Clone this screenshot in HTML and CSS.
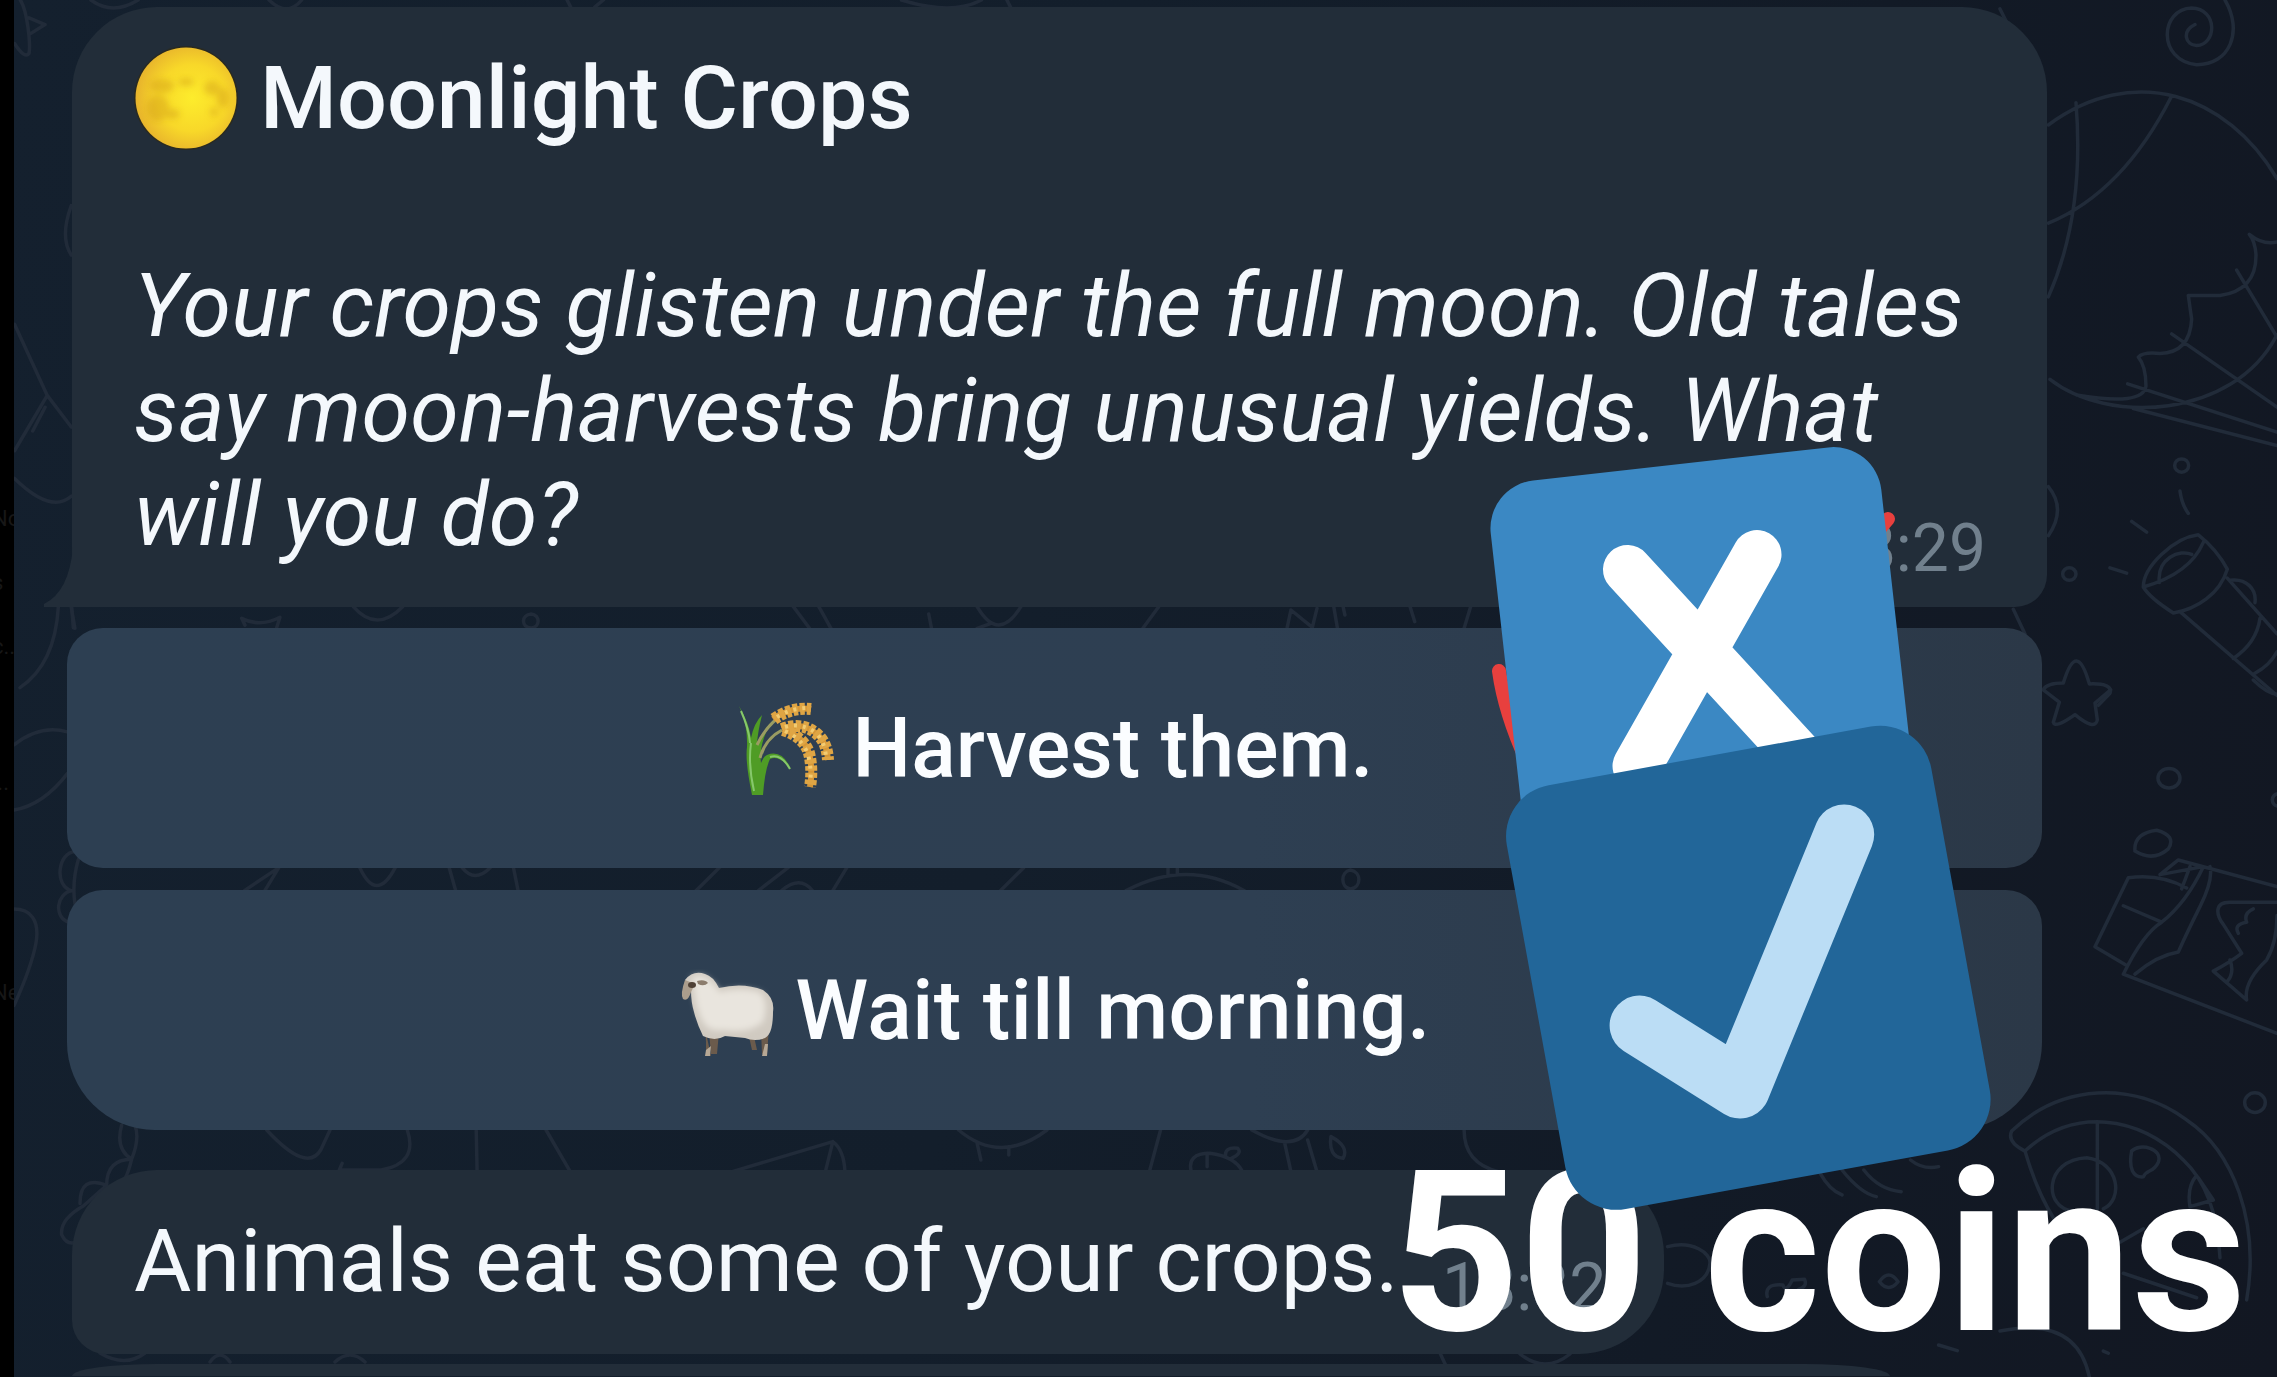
FILE: index.html
```html
<!DOCTYPE html>
<html lang="en">
<head>
<meta charset="utf-8">
<title>Moonlight Crops</title>
<link rel="stylesheet" href="styles.css">
</head>
<body>
<svg class="doodles" viewBox="0 0 2277 1377" aria-hidden="true">
  <!-- top left -->
  <g transform="scale(.727 .3954)">
    <path d="M28 0C38 30 42 110 40 135Q34 150 20 110M40 45L62 62L42 85M125 0Q155 40 190 0M370 0Q395 45 415 0M780 0L785 18M818 18L830 0M1240 0Q1310 40 1350 0M1385 0L1390 18M98 520Q82 600 98 645M20 820L65 1000L20 1140M65 1000L98 1080M45 1090L62 1030M20 1210Q70 1300 98 1255"/>
  </g>
  <!-- left edge -->
  <g transform="translate(0 560) scale(.3333 .521)">
    <path d="M175 90Q165 200 60 245M215 90L220 130M42 355Q120 315 202 330M42 480Q130 470 202 410M225 560C175 560 160 625 215 635M235 575Q215 620 225 660M215 635C170 640 160 685 205 695M42 670C90 670 120 690 108 735Q95 780 42 855M365 1085Q345 1130 395 1150Q420 1110 405 1085M395 1150Q380 1190 360 1200M395 1150Q320 1150 320 1200Q240 1180 240 1235M320 1200L250 1240Q180 1265 185 1295Q200 1315 225 1310M735 125L725 112Q780 130 840 110L830 130"/>
  </g>
  <!-- gaps between the bubbles -->
  <g transform="translate(60 590) scale(.9311 .3333)">
    <path d="M12 50L16 115M315 50Q340 130 368 50M506 72C495 75 495 112 506 114C516 112 516 75 506 72M785 40L805 115M815 50L828 115M933 72L936 115M985 50Q1008 160 1032 50M985 115L1000 100M1180 50L1163 115M1318 112L1322 60L1345 112L1350 55M1368 50L1372 115M1378 50L1380 75M1450 50L1455 95M1515 50L1508 115"/>
  </g>
  <g transform="translate(60 855) scale(.9311 .3333)">
    <path d="M198 107L235 38L220 107M322 38Q340 145 360 38M418 38L425 107M432 38Q445 85 462 38M487 38L492 107M708 38L683 107M782 38L750 107M845 38L830 107M775 107Q795 60 808 107M1035 38L1010 107M1145 107Q1210 10 1272 107M1190 38V60M1200 38V60M1386 45C1375 50 1375 98 1386 102C1398 98 1398 50 1386 45"/>
  </g>
  <g transform="translate(60 1120) scale(.9311 .3333)">
    <path d="M222 30Q265 160 280 90L290 30M373 30Q385 130 345 150H300L303 130M447 30L448 155M522 30L548 155M722 155L830 65L822 155M830 65Q842 90 843 155M965 30Q1010 135 1060 30M985 70L989 120M1019 80V105M1182 30L1170 155M1280 30Q1325 100 1340 30M1315 65L1322 155M1340 60L1350 155M1215 155Q1210 100 1235 100Q1262 110 1270 155M1232 100V140M1252 110Q1250 80 1265 85Q1270 100 1258 115M1365 50Q1362 110 1378 115Q1385 80 1365 50M1508 30Q1508 130 1545 155"/>
  </g>
  <g transform="translate(0 1340)">
    <path d="M100 13Q125 28 145 13M210 22Q220 8 230 22M335 22Q350 8 365 22M1440 13L1446 26M1520 14Q1545 34 1570 14"/>
  </g>
  <!-- swirl, parachute and torch -->
  <g transform="translate(2000 0) scale(.3333 .4464)">
    <path d="M0 20L20 50M585 55C545 70 555 100 590 102C650 100 655 20 575 18C480 20 470 135 590 145C690 145 730 70 675 0M145 280C400 140 680 210 831 400M145 500Q370 430 515 215M228 230Q255 480 145 665M150 850C320 950 700 940 831 750M230 885Q430 910 438 865Q438 820 415 800Q430 788 480 792Q570 790 575 715L565 662H660Q770 650 768 570Q765 540 748 525Q790 550 831 542M383 860L831 968M400 915L831 998M515 748L831 912M710 605L831 755M145 1090Q200 1140 145 1200M40 1365L75 1420M540 1100Q545 1130 565 1150M395 1168L440 1192M330 1272L380 1284M430 1315C430 1270 520 1205 595 1198Q650 1230 682 1275C660 1330 590 1365 520 1373Q450 1340 430 1315Q570 1285 610 1215M478 1305C470 1250 540 1230 575 1242M682 1295L831 1420M540 1370L831 1558M690 1300C740 1295 770 1320 765 1350M780 1385Q770 1440 700 1475M831 1460Q810 1490 765 1508M130 1545Q140 1530 190 1530Q230 1430 268 1532Q340 1530 330 1553L295 1580"/>
    <ellipse cx="545" cy="1043" rx="21" ry="15"/><ellipse cx="208" cy="1286" rx="20" ry="14"/>
  </g>
  <!-- star, banknote and pizza -->
  <g transform="translate(2000 680) scale(.3333 .4444)">
    <path d="M130 22L178 50L160 95Q165 110 225 78Q285 115 292 90L285 52L332 22M405 385Q400 345 470 338Q530 350 505 380Q460 410 405 385M285 600L385 445Q480 435 560 468M285 600L375 640M370 508L485 545M370 662L831 795M370 662Q430 570 485 545Q560 500 610 420L480 438L535 405L831 465M405 662Q470 620 535 612Q560 570 600 510Q640 450 630 420M545 470L570 420M831 500H690C640 500 650 530 670 550L725 615Q690 635 640 655L740 720Q730 680 800 630Q831 590 831 530M760 515Q730 525 740 545Q700 550 715 570M690 630Q705 660 680 680M75 1060Q20 1040 35 1015C180 910 400 900 560 990C700 1060 780 1220 740 1395M75 1060C220 960 420 980 550 1080Q650 1150 660 1300M75 1060Q110 1150 160 1210M292 995V1190M260 1075C130 1080 130 1190 220 1195M260 1075C360 1085 370 1170 310 1190M395 1060C420 1040 490 1055 475 1085C460 1110 440 1100 430 1118C400 1120 385 1100 395 1060M590 1115Q560 1140 570 1185L640 1170L595 1120M360 1265L430 1235M370 1335L590 1390M0 1465Q230 1430 268 1568M310 1510L325 1515M760 0Q800 30 831 32"/>
    <ellipse cx="507" cy="221" rx="33" ry="22"/><ellipse cx="765" cy="951" rx="31" ry="22"/><ellipse cx="835" cy="270" rx="18" ry="14"/>
  </g>
  <g transform="translate(1300 1120) scale(.623 .3333)">
    <path d="M590 380C630 360 660 400 658 430C655 490 620 510 590 490M835 160Q850 210 870 225M870 150Q900 220 925 230M905 150Q930 210 965 215M980 120Q1000 150 1025 140M750 530Q745 490 775 495Q780 520 790 480L810 478Q815 500 800 508M1025 675L1055 692M930 485Q945 445 960 485Q945 520 930 485"/>
  </g>
</svg>

<aside class="edge">
  <span class="edge-text">No</span><span class="edge-text">s</span><span class="edge-text">c..</span><span class="edge-text">l..</span><span class="edge-text">Ne</span>
</aside>

<main class="chat">
  <article class="bubble event">
    <svg class="tail" viewBox="0 0 30 60" aria-hidden="true"><path d="M29 0V60H0V57Q25 45 29 0Z"/></svg>
    <h1 class="title">
      <svg class="moon" viewBox="0 0 104 104" aria-hidden="true">
        <defs>
          <radialGradient id="moonFill" cx=".56" cy=".5" r=".55">
            <stop offset="0" stop-color="#fdec2c"/><stop offset=".6" stop-color="#f8d829"/><stop offset="1" stop-color="#e8b52c"/>
          </radialGradient>
          <filter id="soft"><feGaussianBlur stdDeviation="3"/></filter>
        </defs>
        <circle cx="52" cy="52" r="52" fill="#2a2a20"/>
        <circle cx="52" cy="52" r="50.5" fill="url(#moonFill)"/>
        <g fill="#cf9a18" opacity=".42" filter="url(#soft)"><ellipse cx="24" cy="62" rx="11" ry="13"/><ellipse cx="38" cy="68" rx="8" ry="5"/><ellipse cx="28" cy="40" rx="12" ry="7"/><ellipse cx="78" cy="42" rx="8" ry="7"/><ellipse cx="89" cy="52" rx="6" ry="10"/><circle cx="80" cy="66" r="4"/><ellipse cx="52" cy="36" rx="8" ry="4"/></g>
      </svg>
      <span>Moonlight Crops</span>
    </h1>
    <p class="story">Your crops glisten under the full moon. Old tales<br>say moon-harvests bring unusual yields. What<br>will you do?</p>
    <time class="stamp">18:29</time>
  </article>

  <div class="choices">
    <button class="choice" type="button">
      <svg class="emoji" viewBox="0 -3 98 98" aria-hidden="true">
        <path d="M15 92Q8 58 10 44Q11 22 2 3Q12 20 14 35Q17 20 25 12Q21 28 20 40Q25 32 30 27Q22 45 24 60Q27 53 30 52Q45 46 54 66Q42 52 33 56Q28 66 26 92Z" fill="#4f9c25"/>
        <path d="M17 88Q11 62 14 40M4 8Q12 26 13 40M33 54Q44 50 53 66" stroke="#86c86b" stroke-width="2" fill="none"/>
        <path d="M20 42Q28 25 42 14M23 55Q28 36 45 27" stroke="#9a9c62" stroke-width="3" fill="none"/>
        <g fill="none"><path d="M36 16Q54 3 74 6M45 26Q66 18 81 32Q90 40 91 57M46 26Q67 34 72 50Q76 66 73 84" stroke="#d69737" stroke-width="6"/><path d="M37 16Q54 4 74 6M45 26Q66 18 81 32Q90 40 91 57M46 27Q67 34 72 50Q76 66 73 84" stroke="#dfa544" stroke-width="12" stroke-dasharray="5 2"/><path d="M40 14Q54 5 72 5M48 24Q66 19 80 31Q88 40 89 54M48 28Q66 36 71 52Q75 67 73 80" stroke="#f3cc72" stroke-width="4" stroke-dasharray="3 6"/></g>
      </svg>
      <span>Harvest them.</span>
    </button>
    <button class="choice last" type="button">
      <svg class="emoji" viewBox="0 0 98 98" aria-hidden="true">
        <path d="M26 66L32 94H27L27 80ZM40 70L38 92H32L30 70ZM74 70L78 88H73L69 70ZM90 66L88 92H83L82 68Z" fill="#6b5b4c"/>
        <path d="M27 88L26 94H31L32 84ZM86 82L83 94H88L89 82Z" fill="#b7a895"/>
        <path d="M6 18Q14 8 26 12Q34 14 40 26Q64 20 84 28Q96 36 94 50Q94 72 86 76Q76 80 66 76L46 74Q36 80 24 74Q18 62 15 50Q12 40 12 28Z" fill="#d0cac1"/>
        <path d="M12 16Q22 10 30 18Q38 24 40 30Q64 24 82 31Q90 42 84 60Q70 72 44 68Q28 70 23 58Q16 44 15 26Z" fill="#e9e5de" filter="url(#soft)"/>
        <path d="M6 18L16 22L12 30Q9 40 4 37Q1 32 6 18Z" fill="#ab9d8c"/>
        <ellipse cx="13" cy="23" rx="4" ry="3" fill="#4f4136"/><path d="M18 19Q26 17 29 21Q25 25 19 22Z" fill="#8c7d6d"/>
      </svg>
      <span class="wait">Wait till morning.</span>
    </button>
  </div>

  <article class="bubble result">
    <p class="outcome">Animals eat some of your crops.</p>
    <time class="stamp">18:32</time>
  </article>
  <div class="bubble next"></div>
</main>

<svg class="overlay" viewBox="0 0 2277 1377" aria-hidden="true">
  <path d="M1499 671Q1505 715 1530 768M1875 534L1888 519" stroke="#e8403e" stroke-width="14" stroke-linecap="round" fill="none"/>
</svg>
<strong class="coins">50 coins</strong>
<svg class="overlay" viewBox="0 0 2277 1377" aria-hidden="true">
  <g fill="none" stroke-linecap="round" stroke-linejoin="round">
    <rect x="1422" y="648.4" width="393" height="393" rx="48" fill="#3b88c3" transform="rotate(-6.4)"/>
    <path d="M1627.5 569.5L1800 757M1757 554.5L1637 766" stroke="#fff" stroke-width="49"/>
    <rect x="1331.4" y="1049.4" width="431.4" height="430.8" rx="52" fill="#226699" transform="rotate(-10.3)"/>
    <path d="M1639.6 1025.6L1740 1088.5L1844.2 834.5" stroke="#bbddf5" stroke-width="60"/>
  </g>
</svg>
</body>
</html>
```
FILE: styles.css
```css
* { box-sizing: border-box; }

body {
  position: relative;
  display: flex;
  width: 2277px;
  height: 1377px;
  margin: 0;
  overflow: hidden;
  font-family: Roboto, "Liberation Sans", sans-serif;
  color: #f4f8fc;
  background: linear-gradient(100deg, #14202e 0%, #131e2b 45%, #121a26 75%, #121722 100%);
}

.doodles {
  position: absolute;
  inset: 0;
  width: 2277px;
  height: 1377px;
  fill: none;
  stroke: #212b39;
  stroke-linecap: round;
  stroke-linejoin: round;
}

.doodles path,
.doodles ellipse {
  stroke-width: 3.5px;
  vector-effect: non-scaling-stroke;
}

.edge {
  position: relative;
  display: flex;
  flex: none;
  flex-direction: column;
  width: 14px;
  padding-top: 507px;
  overflow: hidden;
  font-size: 22px;
  line-height: 24px;
  color: #171717;
  background: #000;
}

.edge-text { margin-left: -8px; margin-bottom: 40px; }
.edge-text:nth-child(3) { margin-bottom: 112px; }
.edge-text:nth-child(4) { margin-bottom: 186px; }

.chat {
  position: relative;
  display: flex;
  flex-direction: column;
  align-items: flex-start;
  height: 1377px;
  padding: 7px 0 0 53px;
}

.bubble {
  position: relative;
  flex: none;
  margin-left: 5px;
  background: #222d39;
}

.event {
  width: 1975px;
  height: 600px;
  padding: 38px 63px 0 62px;
  border-radius: 85px 85px 32px 0;
}

.tail {
  position: absolute;
  bottom: 0;
  left: -28px;
  width: 30px;
  height: 60px;
  fill: #222d39;
}

.title {
  display: flex;
  gap: 22px;
  align-items: center;
  height: 105px;
  margin: 0 0 104px;
  font-size: 88px;
  font-weight: 500;
  line-height: 105px;
  white-space: nowrap;
}

.moon { width: 104px; height: 104px; }

.story {
  margin: 0;
  font-size: 88px;
  font-style: italic;
  line-height: 104.6px;
  letter-spacing: .15px;
  white-space: nowrap;
}

.stamp {
  position: absolute;
  font-size: 66px;
  line-height: 80px;
  color: #71808d;
}

.event .stamp { right: 61px; bottom: 18px; }

.choices {
  display: grid;
  flex: none;
  gap: 22px;
  margin: 21px 0 40px;
}

.choice {
  display: flex;
  gap: 18px;
  align-items: center;
  justify-content: center;
  width: 1975px;
  height: 240px;
  padding: 1px 0 0 1px;
  font: 500 82.6px/96px Roboto, "Liberation Sans", sans-serif;
  color: #fbfdff;
  white-space: nowrap;
  background: linear-gradient(90deg, #2d3f52 0%, #2e3f52 60%, #2b3847 100%);
  border: 0;
  border-radius: 36px;
}

.choice.last { border-radius: 36px 36px 88px 88px; }

.wait { letter-spacing: .45px; }

.emoji { width: 98px; height: 98px; }

.result {
  width: 1592px;
  height: 184px;
  padding: 38px 0 0 62px;
  border-radius: 85px 85px 85px 34px;
}

.outcome {
  margin: 0;
  font-size: 88px;
  line-height: 105px;
  white-space: nowrap;
}

.result .stamp { left: 1370px; bottom: 26px; }

.next {
  width: 1818px;
  height: 12px;
  margin-top: 10px;
  border-radius: 85px 85px 0 0 / 12px 12px 0 0;
}

.overlay {
  position: absolute;
  inset: 0;
  width: 2277px;
  height: 1377px;
}

.coins {
  position: absolute;
  top: 1119px;
  left: 1391px;
  height: 258px;
  font-size: 224px;
  font-weight: 700;
  line-height: 270px;
  color: #fff;
  white-space: nowrap;
}
```
